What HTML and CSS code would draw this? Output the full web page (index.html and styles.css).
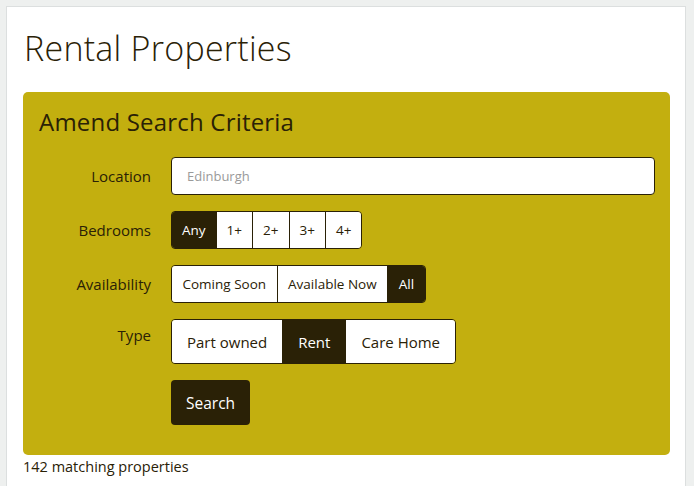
FILE: index.html
```html
<!DOCTYPE html>
<html lang="en">
<head>
    <meta charset="UTF-8">
    <meta name="viewport" content="width=device-width, initial-scale=1.0">
    <title>Rental Properties</title>
    <link rel="stylesheet" href="styles.css">
</head>
<body>
    <div class="page">
        <h1>Rental Properties</h1>
        <form class="search">
            <h2>Amend Search Criteria</h2>
            <div class="row">
                <label for="location">Location</label>
                <input type="text" id="location" placeholder="Edinburgh">
            </div>
            <div class="row">
                <label>Bedrooms</label>
                <div class="toggle small">
                    <button type="button" class="on">Any</button>
                    <button type="button">1+</button>
                    <button type="button">2+</button>
                    <button type="button">3+</button>
                    <button type="button">4+</button>
                </div>
            </div>
            <div class="row">
                <label>Availability</label>
                <div class="toggle small wide">
                    <button type="button">Coming Soon</button>
                    <button type="button">Available Now</button>
                    <button type="button" class="on">All</button>
                </div>
            </div>
            <div class="row">
                <label class="top">Type</label>
                <div class="toggle large">
                    <button type="button">Part owned</button>
                    <button type="button" class="on">Rent</button>
                    <button type="button">Care Home</button>
                </div>
            </div>
            <div class="row">
                <span></span>
                <button type="submit" class="submit">Search</button>
            </div>
        </form>
        <p class="count">142 matching properties</p>
    </div>
</body>
</html>
```

FILE: styles.css
```css
body {
    margin: 0;
    padding: 6px 8px 0 6px;
    background: #eef0ef;
    font-family: "Open Sans", sans-serif;
    color: #2a2106;
}
.page {
    background: #fff;
    border: 1px solid #dcdfdf;
    border-bottom: none;
    padding: 0 15px 20px 16px;
    min-height: 480px;
    box-sizing: border-box;
}
h1 {
    margin: 0;
    padding: 22px 0 25px 1px;
    font-size: 34px;
    font-weight: 300;
    letter-spacing: 0.25px;
    line-height: 38px;
}
.search {
    background: #c3af0f;
    border-radius: 5px;
    padding: 14px 16px 30px 16px;
}
h2 {
    margin: 0 0 19px 0;
    font-size: 24px;
    font-weight: 400;
    letter-spacing: 0.2px;
    line-height: 32px;
}
.row {
    display: grid;
    grid-template-columns: 112px 1fr;
    column-gap: 20px;
    align-items: center;
    justify-items: start;
    margin-bottom: 16px;
}
.row:last-child {
    margin-bottom: 0;
}
.row label {
    justify-self: end;
    font-size: 15px;
}
.row label.top {
    align-self: start;
    padding-top: 6px;
}
input {
    justify-self: stretch;
    height: 38px;
    box-sizing: border-box;
    margin-right: -1px;
    padding: 0 15px;
    border: 1px solid #2a2106;
    border-radius: 4px;
    font-family: inherit;
    font-size: 13px;
}
input::placeholder {
    color: #9a9a9a;
}
.toggle {
    display: flex;
    border: 1px solid #2a2106;
    border-radius: 4px;
    overflow: hidden;
}
.toggle button {
    background: #fff;
    color: #2a2106;
    border: none;
    border-left: 1px solid #2a2106;
    font-family: inherit;
    cursor: pointer;
}
.toggle button:first-child {
    border-left: none;
}
.toggle button.on {
    background: #2a2106;
    color: #fff;
}
.small button {
    height: 36px;
    padding: 0 10px;
    font-size: 13.5px;
}
.wide button {
    padding: 0 10.5px;
}
.large button {
    height: 43px;
    padding: 0 15px;
    font-size: 15px;
}
.submit {
    height: 45px;
    padding: 0 15px;
    background: #2a2106;
    color: #fff;
    border: none;
    border-radius: 4px;
    font-family: inherit;
    font-size: 15.5px;
    cursor: pointer;
}
.count {
    margin: 2px 0 0 0;
    font-size: 14.5px;
}
```
